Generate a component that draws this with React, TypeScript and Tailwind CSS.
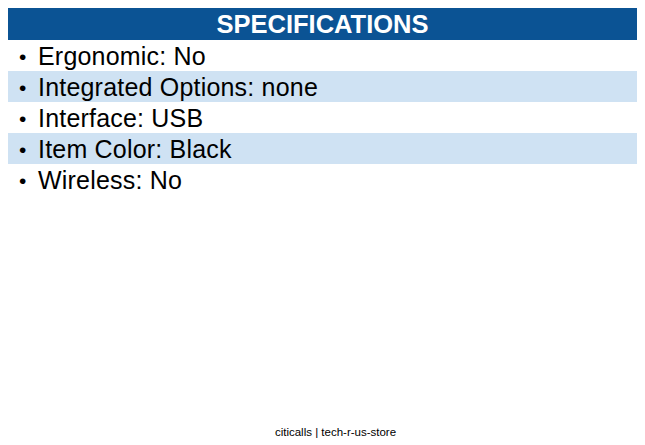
export default function App() {
  const specs = [
    'Ergonomic: No',
    'Integrated Options: none',
    'Interface: USB',
    'Item Color: Black',
    'Wireless: No',
  ]

  return (
    <div className="w-[645px] h-[445px] bg-white flex flex-col font-['Liberation_Sans',Arial,sans-serif] text-black">
      <div className="mx-2 mt-2">
        <div className="h-8 bg-[#0b5394] text-white font-bold text-[25.5px] leading-8 text-center">
          SPECIFICATIONS
        </div>
        <ul>
          {specs.map((s, i) => (
            <li
              key={s}
              className={`h-[31px] flex items-center pt-px text-[25px] tracking-[0.2px] leading-none ${i % 2 === 1 ? 'bg-[#cfe2f3]' : ''}`}
            >
              <span className="w-[30px] pl-[11px] text-[21px]">•</span>
              <span>{s}</span>
            </li>
          ))}
        </ul>
      </div>
      <div className="mt-auto pb-[5px] pl-[26px] text-center text-[11.5px] leading-4">
        citicalls | tech-r-us-store
      </div>
    </div>
  )
}
